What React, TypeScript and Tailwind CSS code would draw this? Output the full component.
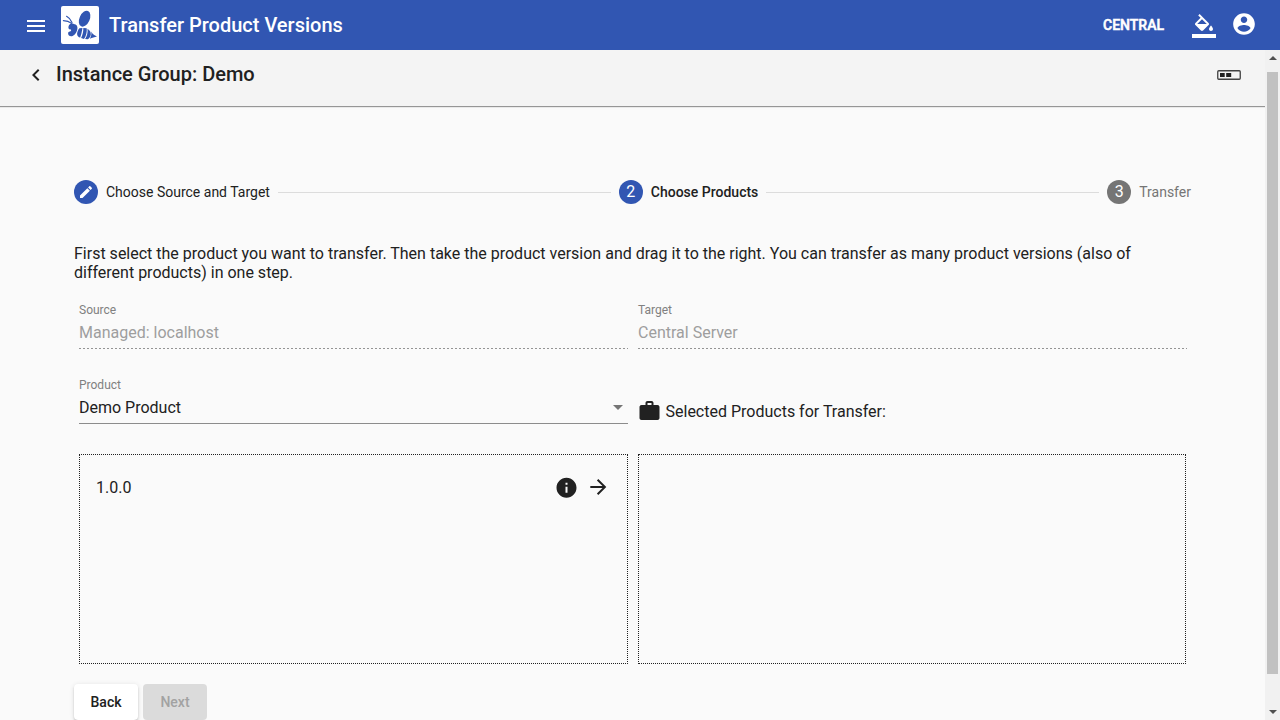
import type { ReactNode } from 'react';

function Icon({ d, className = 'size-6' }: { d: string; className?: string }) {
  return (
    <svg viewBox="0 0 24 24" fill="currentColor" className={`block shrink-0 ${className}`}>
      <path d={d} />
    </svg>
  );
}

const icons = {
  menu: 'M3 18h18v-2H3v2zm0-5h18v-2H3v2zm0-7v2h18V6H3z',
  fill: 'M16.56 8.94L7.62 0 6.21 1.41l2.38 2.38-5.15 5.15c-.59.59-.59 1.54 0 2.12l5.5 5.5c.29.29.68.44 1.06.44s.77-.15 1.06-.44l5.5-5.5c.59-.58.59-1.53 0-2.12zM5.21 10L10 5.21 14.79 10H5.21zM19 11.5s-2 2.17-2 3.5c0 1.1.9 2 2 2s2-.9 2-2c0-1.33-2-3.5-2-3.5zM0 20h24v4H0z',
  account:
    'M12 2C6.48 2 2 6.48 2 12s4.48 10 10 10 10-4.48 10-10S17.52 2 12 2zm0 3c1.66 0 3 1.34 3 3s-1.34 3-3 3-3-1.34-3-3 1.34-3 3-3zm0 14.2c-2.5 0-4.71-1.28-6-3.22.03-1.99 4-3.08 6-3.08 1.99 0 5.97 1.09 6 3.08-1.29 1.94-3.5 3.22-6 3.22z',
  back: 'M15.41 7.41L14 6l-6 6 6 6 1.41-1.41L10.83 12z',
  edit: 'M3 17.25V21h3.75L17.81 9.94l-3.75-3.75L3 17.25zM20.71 7.04c.39-.39.39-1.02 0-1.41l-2.34-2.34c-.39-.39-1.02-.39-1.41 0l-1.83 1.83 3.75 3.75 1.83-1.83z',
  work: 'M20 6h-4V4c0-1.11-.89-2-2-2h-4c-1.11 0-2 .89-2 2v2H4c-1.11 0-1.99.89-1.99 2L2 19c0 1.11.89 2 2 2h16c1.11 0 2-.89 2-2V8c0-1.11-.89-2-2-2zm-6 0h-4V4h4v2z',
  info: 'M12 2C6.48 2 2 6.48 2 12s4.48 10 10 10 10-4.48 10-10S17.52 2 12 2zm1 15h-2v-6h2v6zm0-8h-2V7h2v2z',
  forward: 'M12 4l-1.41 1.41L16.17 11H4v2h12.17l-5.58 5.59L12 20l8-8z',
};

function BeeLogo() {
  return (
    <svg viewBox="0 0 38 38" className="block size-[38px] rounded-[2px] bg-white text-[#3156b2]" fill="currentColor">
      <ellipse cx="23.6" cy="12.7" rx="5.1" ry="8.4" transform="rotate(24 23.6 12.7)" />
      <g fill="none" stroke="currentColor" strokeWidth="1.2" strokeLinecap="round">
        <path d="M2.4 14.6C5 14.6 8.4 15.6 10.6 17.4" />
        <path d="M5.6 10.3C8 11.6 9.8 13.6 11 16.4" />
      </g>
      <path d="M8.2 19C9.2 17.5 11.3 17.3 12.8 18C15.6 18.2 16.8 20.4 16.4 22.8C16 25.8 14.4 28.8 11.6 30C9.2 30.8 7 29.5 7.1 27.2C7.2 26.3 7.9 26 8.8 25.6C10.2 25 10.5 24 9.8 23.2C8.6 23.8 7.5 22.8 7.4 21.4C7.4 20.5 7.7 19.6 8.2 19Z" />
      <path d="M18.4 22.2L21.5 22C20.9 25.6 20.2 28.6 19.2 31.6C17.4 31.4 16 29.8 16.1 27.8C16.2 25.8 17 24 18.4 22.2Z" />
      <path d="M22.3 22L25.7 22.3C26.1 26 25.3 29.8 23 33L20.1 31.9C21.7 28.7 22.5 25.5 22.3 22Z" />
      <path d="M26.5 22.7C28.8 24.1 30 26.1 29.8 28.5C29.6 30.6 28.4 32.2 26.7 33.3L24.1 32.9C26 30 27 26.6 26.5 22.7Z" />
      <path d="M30.2 25.6C31.5 28.1 33.2 29.5 36 30.6C33.4 31 31.4 32.2 28.8 32.7C30.2 30.7 30.7 28.2 30.2 25.6Z" />
    </svg>
  );
}

function Step({ badge, active, children, label }: { badge: ReactNode; active?: boolean; children?: ReactNode; label: string }) {
  return (
    <div className="flex items-center gap-2">
      <span
        className={`flex size-6 items-center justify-center rounded-full text-base text-white ${active ? 'bg-[#3156b2]' : 'bg-[#757575]'}`}
      >
        {badge}
      </span>
      <span className="text-sm leading-6">{children ?? label}</span>
    </div>
  );
}

function Field({ label, value, disabled }: { label: string; value: string; disabled?: boolean }) {
  return (
    <div className="flex h-[75px] w-[549px] flex-col pt-[1px]">
      <span className="h-[18px] text-xs leading-[18px] text-[#808080]">{label}</span>
      <div className={`flex h-[26px] items-center justify-between pr-[5px] text-base ${disabled ? 'text-[#9e9e9e]' : ''}`}>
        <span className="pt-[2px]">{value}</span>
        {!disabled && (
          <svg viewBox="0 0 10 5" className="block h-[5px] w-[10px] text-[#757575]" fill="currentColor">
            <path d="M0 0h10L5 5z" />
          </svg>
        )}
      </div>
      {disabled ? (
        <div className="mt-[3px] h-px bg-[repeating-linear-gradient(to_right,#949494_0_2px,transparent_2px_4px)]" />
      ) : (
        <div className="mt-[3px] h-px bg-[#8c8c8c]" />
      )}
    </div>
  );
}

export default function App() {
  return (
    <div className="flex h-[720px] w-[1280px] flex-col overflow-hidden bg-[#fafafa] font-['Roboto',sans-serif] text-[#212121]">
      <header className="flex h-[50px] shrink-0 items-center bg-[#3156b2] pl-6 text-white">
        <Icon d={icons.menu} className="mt-[2px] size-6" />
        <div className="ml-[13px]">
          <BeeLogo />
        </div>
        <h1 className="ml-[10px] text-xl font-medium">Transfer Product Versions</h1>
        <div className="ml-auto flex items-center pr-[23px]">
          <span className="text-sm font-medium [-webkit-text-stroke:0.5px_white]">CENTRAL</span>
          <Icon d={icons.fill} className="ml-7 mt-[2px] size-6" />
          <Icon d={icons.account} className="ml-[15px] -mt-[2px] size-[26px]" />
        </div>
      </header>

      <div className="flex min-h-0 flex-1">
        <main className="flex w-[1265px] flex-col">
          <div className="flex h-[56px] shrink-0 items-start bg-[#f4f4f4] pl-6 pr-6 shadow-[0_1px_1px_rgba(0,0,0,0.4)]">
            <Icon d={icons.back} className="mt-[13px] size-6" />
            <h2 className="ml-2 mt-[10px] text-xl font-medium">Instance Group: Demo</h2>
            <svg viewBox="0 0 24 10" className="ml-auto mt-5 block h-[10px] w-6">
              <rect x="0.75" y="0.75" width="22.5" height="8.5" rx="1" fill="none" stroke="#424242" strokeWidth="1.3" />
              <path d="M3 3h4.7v4H3zM9.2 3h5v4h-5z" fill="#212121" />
            </svg>
          </div>

          <div className="flex flex-1 flex-col pl-[74px] pr-[74px] pt-[74px]">
            <div className="flex h-6 items-center">
              <Step badge={<Icon d={icons.edit} className="size-4" />} active label="Choose Source and Target" />
              <div className="mx-2 h-px flex-1 bg-[#dcdcdc]" />
              <Step badge="2" active label="Choose Products">
                <span className="font-medium">Choose Products</span>
              </Step>
              <div className="mx-2 h-px flex-1 bg-[#dcdcdc]" />
              <Step badge="3" label="Transfer">
                <span className="text-[#757575]">Transfer</span>
              </Step>
            </div>

            <p className="mt-10 text-base leading-[19px]">
              First select the product you want to transfer. Then take the product version and drag it to the right. You
              can transfer as many product versions (also of different products) in one step.
            </p>

            <div className="ml-[5px] mt-[18px] grid grid-cols-[549px_549px] gap-x-[10px]">
              <Field label="Source" value="Managed: localhost" disabled />
              <Field label="Target" value="Central Server" disabled />
              <Field label="Product" value="Demo Product" />
              <div className="flex h-[75px] items-start pt-[24px]">
                <Icon d={icons.work} className="-ml-px size-6 translate-x-[0.5px]" />
                <span className="ml-[4.5px] mt-[1px] leading-6">Selected Products for Transfer:</span>
              </div>
            </div>

            <div className="ml-[5px] mt-[4px] flex gap-[10px]">
              <div className="h-[210px] w-[549px] border border-dotted border-[#212121] pl-4 pr-[17px] pt-[20px]">
                <div className="flex h-6 items-start">
                  <span className="pt-px text-base leading-6">1.0.0</span>
                  <Icon d={icons.info} className="ml-auto mt-px size-6 translate-x-[0.5px] -translate-y-[0.2px]" />
                  <Icon d={icons.forward} className="ml-2 size-6 translate-x-[0.3px]" />
                </div>
              </div>
              <div className="h-[210px] w-[548px] border border-dotted border-[#212121]" />
            </div>

            <div className="mt-5 flex gap-[5px] text-sm font-medium">
              <button className="h-9 w-16 rounded bg-white shadow-[0_3px_1px_-2px_rgba(0,0,0,0.2),0_2px_2px_0_rgba(0,0,0,0.14),0_1px_5px_0_rgba(0,0,0,0.12)]">
                Back
              </button>
              <button className="h-9 w-16 rounded bg-[#dbdbdb] text-[#a2a2a2]" disabled>
                Next
              </button>
            </div>
          </div>
        </main>

        <div className="flex w-[15px] flex-col items-center justify-between bg-[#f1f1f1] pb-[6px] pt-[6px]">
          <svg viewBox="0 0 8 4" className="block h-1 w-2" fill="#505050">
            <path d="M0 4h8L4 0z" />
          </svg>
          <div className="mb-[36px] mt-[12px] w-[11px] flex-1 bg-[#c1c1c1]" />
          <svg viewBox="0 0 8 4" className="block h-1 w-2" fill="#505050">
            <path d="M0 0h8L4 4z" />
          </svg>
        </div>
      </div>
    </div>
  );
}
